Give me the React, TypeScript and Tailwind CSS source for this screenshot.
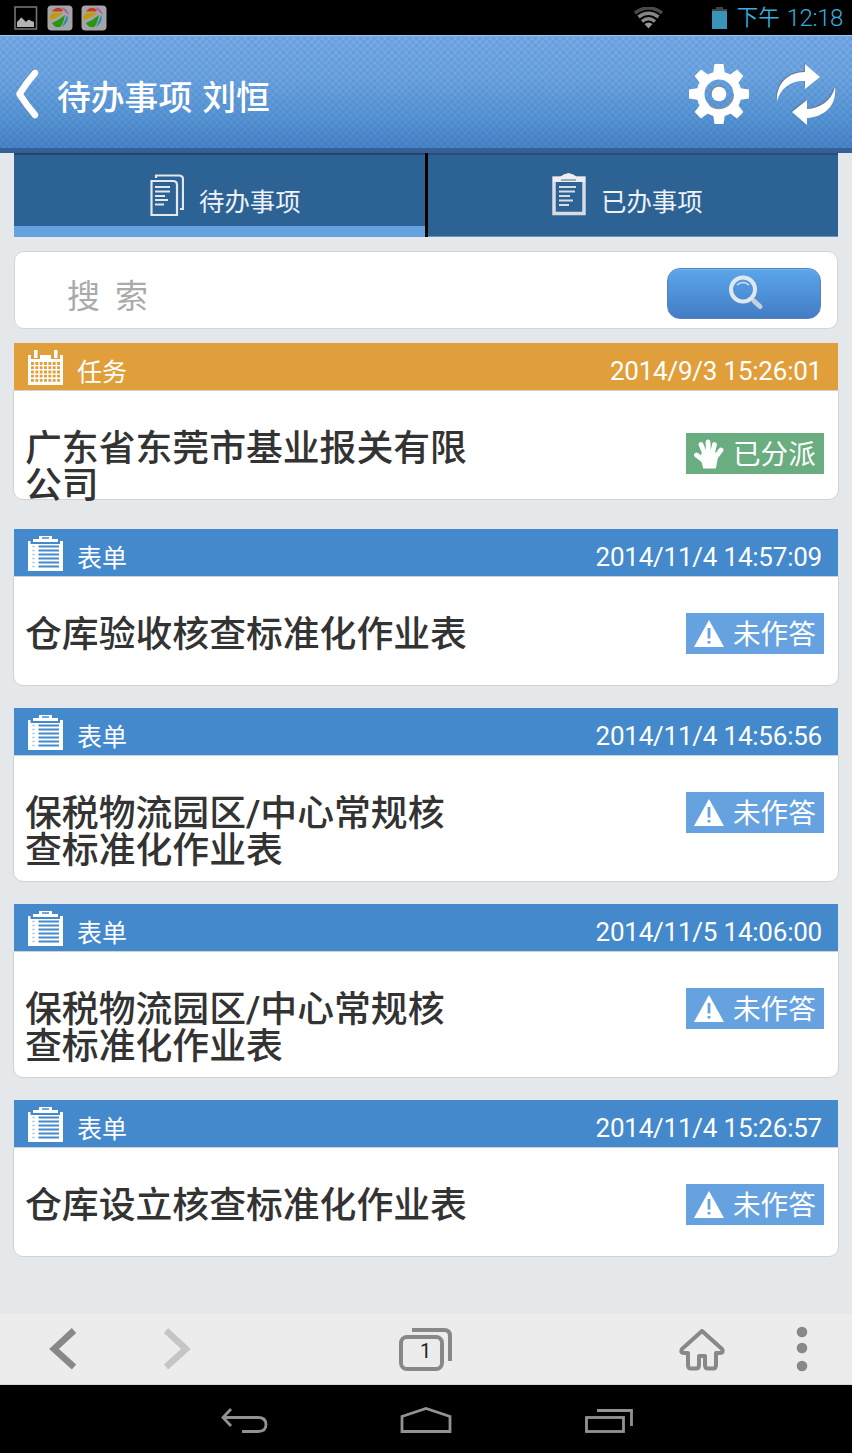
import type { ReactNode } from "react";

type Entry = {
  kind: "task" | "form";
  date: string;
  title: string;
  height: string;
};

const entries: Entry[] = [
  { kind: "task", date: "2014/9/3 15:26:01", title: "广东省东莞市基业报关有限公司", height: "h-[110px] mb-[29px]" },
  { kind: "form", date: "2014/11/4 14:57:09", title: "仓库验收核查标准化作业表", height: "h-[110px] mb-[22px]" },
  { kind: "form", date: "2014/11/4 14:56:56", title: "保税物流园区/中心常规核查标准化作业表", height: "h-[127px] mb-[22px]" },
  { kind: "form", date: "2014/11/5 14:06:00", title: "保税物流园区/中心常规核查标准化作业表", height: "h-[127px] mb-[22px]" },
  { kind: "form", date: "2014/11/4 15:26:57", title: "仓库设立核查标准化作业表", height: "h-[110px]" },
];

function AppBadge() {
  return (
    <svg width="26" height="26" viewBox="0 0 26 26">
      <rect x="0.5" y="0.5" width="25" height="25" rx="4" fill="#a5a5a7" />
      <path d="M5 6.500 Q10 0 16 5 L15 6.500 Z" fill="#c63c18" />
      <path d="M2.500 14.500 Q3 8 6 8 L16 8 Q12 12 3 15 Z" fill="#c59a09" />
      <path d="M5 18 Q12 15 18 10 Q16 20 13 22 Q7 23 5 18 Z" fill="#2b9410" />
      <path d="M20 10 Q23 16 15 22 Q18 16 20 10 Z" fill="#198dbb" />
      <path d="M14 2 Q20 3 22 10 Q18 7 14 2 Z" fill="#a957ba" />
    </svg>
  );
}

function StatusBar() {
  return (
    <div className="flex h-[35px] items-center justify-between bg-black pl-[14px] pr-[9px]">
      <div className="flex items-center gap-[8px]">
        <svg width="24" height="24" viewBox="0 0 24 24" className="mr-[1px]">
          <rect x="1" y="1" width="21.500" height="22" fill="none" stroke="#737373" strokeWidth="1.600" />
          <path d="M3 21 V16 Q5 14 6 13 Q7 10 9 13 L12 16 Q15 12 17 15 Q20 15 20 17 V21 Z" fill="#b3b3b3" />
        </svg>
        <AppBadge />
        <AppBadge />
      </div>
      <div className="flex items-center">
        <svg width="29" height="22" viewBox="0 0 29 22" className="mr-[49px]" fill="none">
          <path d="M1 6 Q14.500 -4 28 6" stroke="#4a4a4a" strokeWidth="3.500" />
          <path d="M4.500 10 Q14.500 2.500 24.500 10" stroke="#858585" strokeWidth="3.500" />
          <path d="M8 14.500 Q14.500 9 21 14.500" stroke="#8a8a8a" strokeWidth="3.500" />
          <path d="M10.500 17 Q14.500 14 18.500 17 L14.500 21.500 Z" fill="#999" />
        </svg>
        <svg width="15" height="22" viewBox="0 0 15 22" className="mr-[10px]">
          <path d="M4 0 H11 V2 H15 V5 H0 V2 H4 Z" fill="#444" />
          <rect y="4" width="15" height="18" fill="#3894b8" />
        </svg>
        <span className="flex gap-[7px] text-[21.500px] leading-[34px] text-[#33b0dd]">
          <span className="font-[350]">下午</span>
          <span className="text-[24px] font-light tracking-[-0.4px]">12:18</span>
        </span>
      </div>
    </div>
  );
}

function Header() {
  return (
    <header className="flex h-[118px] items-center border-b-[5px] border-[#355f95] bg-[radial-gradient(ellipse_at_center,rgba(35,75,150,0.22)_0,rgba(35,75,150,0)_60%),radial-gradient(ellipse_at_center,rgba(35,75,150,0.22)_0,rgba(35,75,150,0)_60%),linear-gradient(#78ade8,#6fa8e2_35%,#5a99d7_70%,#4a85c9)] bg-[length:7px_7px,7px_7px,100%_100%] bg-[position:0_0,3.5px_3.5px,0_0] pl-[15px] pr-[16px] shadow-[inset_0_1px_0_#9ac4ed]">
      <svg width="24" height="50" viewBox="0 0 24 50" fill="none" className="mt-[4px]">
        <path d="M19 2.500 Q10 13 3.500 25 Q11 38 19 47" stroke="#6f7785" strokeWidth="5" strokeLinecap="round" strokeLinejoin="round" opacity=".6" />
        <path d="M20 4 Q11 14 4.500 25 Q12 37 20 46" stroke="#fff" strokeWidth="6.500" strokeLinecap="round" strokeLinejoin="round" />
      </svg>
      <h1 className="ml-[18px] mt-[14px] flex gap-[10px] text-[33.800px] font-medium leading-[40px] text-white"><span>待办事项</span><span>刘恒</span></h1>
      <svg width="62" height="62" viewBox="-31 -31 62 62" className="ml-auto mt-[5px]" fill="#fff">
        <g>
          <path d="M-4.500 -30 H4.500 L6 -20 H-6 Z" />
          <path d="M-4.500 -30 H4.500 L6 -20 H-6 Z" transform="rotate(45)" />
          <path d="M-4.500 -30 H4.500 L6 -20 H-6 Z" transform="rotate(90)" />
          <path d="M-4.500 -30 H4.500 L6 -20 H-6 Z" transform="rotate(135)" />
          <path d="M-4.500 -30 H4.500 L6 -20 H-6 Z" transform="rotate(180)" />
          <path d="M-4.500 -30 H4.500 L6 -20 H-6 Z" transform="rotate(225)" />
          <path d="M-4.500 -30 H4.500 L6 -20 H-6 Z" transform="rotate(270)" />
          <path d="M-4.500 -30 H4.500 L6 -20 H-6 Z" transform="rotate(315)" />
        </g>
        <circle r="18.500" fill="none" stroke="#fff" strokeWidth="8" />
        <path d="M14.500 0 A14.500 14.500 0 0 1 -10 10.500" fill="none" stroke="#8b9099" strokeWidth="1.200" />
        <path d="M-7.500 0 A7.500 7.500 0 0 1 5 -5.600" fill="none" stroke="#7f858f" strokeWidth="2" />
        <circle r="7.300" />
      </svg>
      <svg width="60" height="62" viewBox="0 0 60 62" className="ml-[26px] mt-[4px]" fill="#fff">
        <g fill="#6c7480" opacity=".7" transform="translate(-1 -1)">
          <path d="M1 38 C0 20 13 9 29 9 V1 L44 14 L29 26 V18 C16 17 5 24 1 38 Z" />
          <path d="M59 24 C61 43 48 54 31 55 V62 L16 49 L31 37 V46 C44 45 55 39 59 24 Z" />
        </g>
        <path d="M1 38 C0 20 13 9 29 9 V1 L44 14 L29 26 V18 C16 17 5 24 1 38 Z" />
        <path d="M59 24 C61 43 48 54 31 55 V62 L16 49 L31 37 V46 C44 45 55 39 59 24 Z" />
      </svg>
    </header>
  );
}

function Tabs() {
  return (
    <nav className="mx-[14px] flex h-[84px] bg-[#2d6295] text-[25.400px] text-[#edf2f7]">
      <div className="flex w-[410.500px] items-start border-b-[11px] border-[#67a2e0] pl-[136px] shadow-[inset_0_2px_0_#21476f]">
        <svg width="34" height="43" viewBox="0 0 34 43" className="mt-[21px]" fill="none" stroke="#e4e7ec" strokeWidth="2.200">
          <path d="M1.500 7 H23 Q27 7 27 11 V41 H1.500 Z" />
          <path d="M6 4 V1.500 H29 Q33 1.500 33 5.500 V35 H30" />
          <path d="M5 13 H20 M5 17.500 H20 M5 22 H15 M5 26 H18 M5 30.500 H14" strokeWidth="2" />
        </svg>
        <span className="ml-[15px] mt-[33px] leading-[32px]">待办事项</span>
      </div>
      <div className="w-[3px] bg-black" />
      <div className="flex flex-1 items-start border-b border-[#6b94bc] pl-[124.500px] shadow-[inset_0_2px_0_#244f7c]">
        <svg width="34" height="43" viewBox="0 0 34 43" className="mt-[20px]" fill="none" stroke="#d8dce2" strokeWidth="2">
          <path d="M2 5 H32 V40.500 H2 Z" strokeWidth="3.500" />
          <path d="M1 4 H8 Q11 1 16.500 0 Q22 1 25 4 H33 V9 H1 Z" fill="#eceef0" stroke="none" />
          <path d="M9 7 H24" stroke="#7e92aa" strokeWidth="1.500" />
          <path d="M7 14 H24 M7 18.500 H23 M7 23 H18 M7 27.500 H21 M7 32 H17" />
        </svg>
        <span className="ml-[15px] mt-[33px] leading-[32px]">已办事项</span>
      </div>
    </nav>
  );
}

function Search() {
  return (
    <div className="mx-[14px] mt-[14px] flex h-[78px] items-center justify-between rounded-[10px] border-[1.500px] border-[#d3d5d8] bg-white pl-[52px] pr-[16px]">
      <span className="mt-[14px] flex gap-[15px] text-[33px] leading-[40px] text-[#aaa]"><span>搜</span><span>索</span></span>
      <button className="mt-[6px] flex h-[51px] w-[154px] items-center justify-center rounded-[13px] border border-[#5a7fc0] bg-linear-to-b from-[#5aa6ea] to-[#427dc5] shadow-[inset_0_1px_0_#6bbcf2]">
        <svg width="36" height="36" viewBox="0 0 36 36" fill="none" className="ml-[3px]">
          <path d="M26 26 L32 31.500" stroke="#c3d0de" strokeWidth="5" strokeLinecap="round" />
          <circle cx="15" cy="14.500" r="12" stroke="#e1e7ed" strokeWidth="4" />
          <path d="M9 10 Q15 5 21 10" stroke="#d4e5f5" strokeWidth="1.500" />
        </svg>
      </button>
    </div>
  );
}

function CalendarIcon() {
  return (
    <svg width="35" height="35" viewBox="0 0 35 35" fill="none" stroke="#fff">
      <path d="M0 5 H3 V9 H12 V5 H23 V9 H32 V5 H35 V35 H0 Z M6 0 H9.500 V8 H6 Z M26 0 H29.500 V8 H26 Z" fill="#fff" stroke="none" />
      <path d="M3 13.500 H32 M3 17.700 H32 M3 22 H32 M3 26.200 H32 M3 30.400 H32" stroke="#e39f3b" strokeWidth="2.800" strokeDasharray="2.900 1.450" />
    </svg>
  );
}

function FormIcon() {
  return (
    <svg width="35" height="35" viewBox="0 0 35 35">
      <path d="M0 5 H2.500 V8 H32 V5 H35 V35 H0 Z M5 3 H11 V0 H24 V3 H30 V6 H5 Z" fill="#fff" />
      <path d="M4 10.500 H7 M4 14.500 H7 M4 18.500 H7 M4 22.500 H7 M4 26.500 H7 M4 30.500 H7" stroke="#b7d2ec" strokeWidth="1.500" />
      <path d="M10.500 10.500 H31 M10.500 14.500 H31 M10.500 18.500 H31 M10.500 22.500 H31 M10.500 26.500 H31 M10.500 30.500 H31" stroke="#4489cb" strokeWidth="2" />
      <path d="M14 2 H21" stroke="#4489cb" strokeWidth="1.500" />
    </svg>
  );
}

function HandIcon() {
  return (
    <svg width="30" height="30" viewBox="0 0 30 30" stroke="#fff" strokeWidth="4.800" strokeLinecap="round">
      <path d="M10 28.500 Q9 23 7 20 L9 13 H20 L23 18 Q22 23 21 28.500 Z" fill="#fff" strokeWidth="2" />
      <path d="M9 21 L2.500 16 M11 15 L7 5.500 M14.500 13 L14 3 M18.500 14 L20.500 5.500 M21 19 L27 11" />
    </svg>
  );
}

function WarnIcon() {
  return (
    <svg width="30" height="27" viewBox="0 0 30 27">
      <path d="M15 0 L30 27 H0 Z" fill="#fff" />
      <path d="M15 8 V18.500 M15 21 V23.500" stroke="#67a2e0" strokeWidth="2.800" />
    </svg>
  );
}

function Badge({ color, icon, children }: { color: string; icon: ReactNode; children: ReactNode }) {
  return (
    <div className={`flex h-[41px] w-[138px] items-center pl-[8px] text-[27.600px] text-white ${color}`}>
      {icon}
      <span className="ml-[9px] mt-[3px] whitespace-nowrap leading-[40px]">{children}</span>
    </div>
  );
}

function Card({ entry }: { entry: Entry }) {
  const task = entry.kind === "task";
  return (
    <article>
      <div className={`mx-[14px] flex h-[47px] items-start pl-[14px] pr-[16px] pt-[7px] text-white ${task ? "bg-[#e19f3b]" : "bg-[#4489cb]"}`}>
        {task ? <CalendarIcon /> : <FormIcon />}
        <span className="ml-[14px] mt-[7px] text-[25px] leading-[32px]">{task ? "任务" : "表单"}</span>
        <time className="ml-auto mt-[5px] text-[26px] leading-[32px] tracking-[-0.220px]">{entry.date}</time>
      </div>
      <div className={`mx-[13px] flex items-start justify-between rounded-b-[10px] border-[1.500px] border-[#d0d2d6] bg-white pl-[11px] pr-[14px] ${entry.height}`}>
        <h2 className="mt-[38.500px] w-[446px] break-all text-[36.850px] font-medium leading-[37px] text-[#333]">{entry.title}</h2>
        {task ? (
          <div className="mt-[42px]"><Badge color="bg-[#69ad80]" icon={<HandIcon />}>已分派</Badge></div>
        ) : (
          <div className="mt-[36px]"><Badge color="bg-[#67a2e0]" icon={<WarnIcon />}>未作答</Badge></div>
        )}
      </div>
    </article>
  );
}

function BrowserBar() {
  return (
    <div className="flex h-[71px] items-center border-b border-[#d5d8d6] bg-[#ececec] pl-[49px] pr-[44px]">
      <svg width="28" height="42" viewBox="0 0 28 42" fill="none" stroke="#888" strokeWidth="6.500">
        <path d="M25 2.500 L5 21 L25 39" />
      </svg>
      <svg width="28" height="42" viewBox="0 0 28 42" fill="none" stroke="#c5c5c5" strokeWidth="6.500" className="ml-[86px]">
        <path d="M3 2.500 L23 21 L3 39" />
      </svg>
      <div className="relative ml-[208px] h-[43px] w-[53px]">
        <svg width="53" height="43" viewBox="0 0 53 43" fill="none" stroke="#888" strokeWidth="4">
          <rect x="2" y="9" width="41" height="32" rx="6" />
          <path d="M13 2 H45 Q51 2 51 8 V33" />
        </svg>
        <span className="absolute left-[21px] top-[10px] text-[20px] leading-[26px] text-[#222]">1</span>
      </div>
      <svg width="46" height="42" viewBox="0 0 46 42" fill="none" stroke="#888" strokeWidth="4" strokeLinejoin="round" className="ml-auto mt-[2px]">
        <path d="M23 2 L43 20 Q45 24 41 24 H37 V36 Q37 39.500 34 39.500 H29 Q26 39.500 26 36 V27 H20 V36 Q20 39.500 17 39.500 H12 Q9 39.500 9 36 V24 H5 Q1 24 3 20 Z" />
      </svg>
      <svg width="12" height="46" viewBox="0 0 12 46" fill="#888" className="ml-[71px]">
        <circle cx="6" cy="6" r="5.300" />
        <circle cx="6" cy="22" r="5.300" />
        <circle cx="6" cy="40" r="5.300" />
      </svg>
    </div>
  );
}

function SystemNav() {
  return (
    <div className="flex flex-1 items-start bg-black pl-[221px] pt-[21px]">
      <svg width="47" height="28" viewBox="0 0 47 28" fill="none" stroke="#929292" strokeWidth="2.800">
        <path d="M10 3 L2 11.500 L10 20 M2 11.500 H37 Q45 11.500 45 18.500 Q45 25.500 37 25.500 H21" />
      </svg>
      <svg width="52" height="28" viewBox="0 0 52 28" fill="none" stroke="#929292" strokeWidth="2.800" className="ml-[132px]">
        <path d="M2 25.500 V10.500 L26 2.500 L50 10.500 V25.500 Z" />
      </svg>
      <svg width="48" height="28" viewBox="0 0 48 28" fill="none" stroke="#929292" strokeWidth="2.800" className="ml-[133px]">
        <rect x="1.500" y="11.500" width="37" height="14" />
        <path d="M12 4.500 H46.500 V20" />
      </svg>
    </div>
  );
}

export default function App() {
  return (
    <div className="flex h-[1453px] w-[852px] flex-col overflow-hidden bg-[#e4e8eb] font-[Roboto,'Noto_Sans_CJK_SC',sans-serif]">
      <StatusBar />
      <Header />
      <main className="h-[1161px] shrink-0">
        <Tabs />
        <Search />
        <div className="mt-[14px]">
          {entries.map((entry) => (
            <Card key={entry.date} entry={entry} />
          ))}
        </div>
      </main>
      <BrowserBar />
      <SystemNav />
    </div>
  );
}
